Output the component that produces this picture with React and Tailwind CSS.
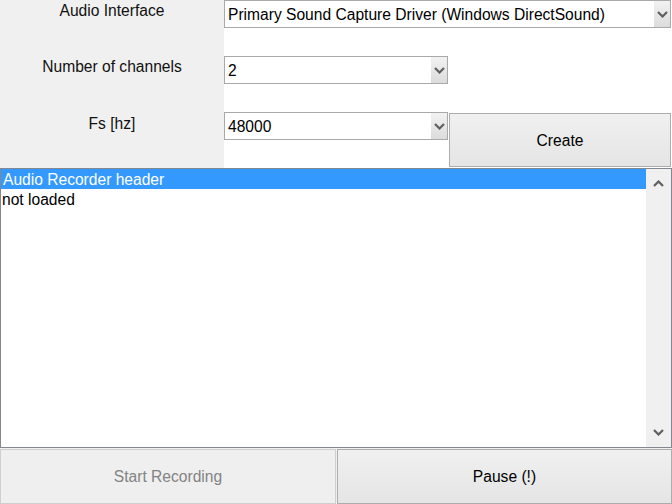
const Chevron = ({ up = false, className = "" }) => (
    <svg width="11" height="7" viewBox="0 0 11 7" className={className}>
        <path
            d={up ? "M1 6 L5.5 1.5 L10 6" : "M1 1 L5.5 5.5 L10 1"}
            fill="none"
            stroke="#5f5f5f"
            strokeWidth="2.2"
        />
    </svg>
);

const Select = ({ value, width }) => (
    <div
        className={`${width} h-[28px] border border-[#a9a9a9] bg-white flex items-center`}
    >
        <span className="flex-1 pl-[3px] pt-[1px] text-black truncate">{value}</span>
        <div className="w-[16px] h-full bg-gradient-to-b from-[#f2f2f2] to-[#dcdcdc] flex items-center justify-center">
            <Chevron />
        </div>
    </div>
);

const App = () => {
    return (
        <div className="w-[672px] h-[504px] bg-[#f0f0f0] flex flex-col text-[15.6px] font-['Liberation_Sans',Arial,sans-serif] overflow-hidden">
            {/* settings */}
            <div className="flex h-[168px]">
                <div className="w-[224px] flex flex-col text-[#111] leading-[20px]">
                    <div className="h-[56px] text-center pt-[1px]">Audio Interface</div>
                    <div className="h-[56px] text-center pt-[1px]">Number of channels</div>
                    <div className="h-[56px] text-center pt-[2px]">Fs [hz]</div>
                </div>
                <div className="flex-1 bg-white flex flex-col">
                    <div className="h-[56px]">
                        <Select
                            value="Primary Sound Capture Driver (Windows DirectSound)"
                            width="w-[447px]"
                        />
                    </div>
                    <div className="h-[56px]">
                        <Select value="2" width="w-[224px]" />
                    </div>
                    <div className="h-[56px] flex items-start">
                        <Select value="48000" width="w-[224px]" />
                        <button className="ml-[1px] mt-[1px] w-[222px] h-[54px] pt-[2px] border border-[#adadad] bg-gradient-to-b from-[#f0f0f0] to-[#e5e5e5] text-black">
                            Create
                        </button>
                    </div>
                </div>
            </div>

            {/* list */}
            <div className="h-[280px] border border-[#828790] bg-white flex">
                <div className="flex-1 flex flex-col">
                    <div className="h-[20px] bg-[#3399ff] text-white pl-[2px] leading-[21px]">
                        Audio Recorder header
                    </div>
                    <div className="h-[20px] text-black pl-[1px] leading-[21px]">not loaded</div>
                </div>
                <div className="w-[25px] bg-[#f0f0f0] flex flex-col justify-between items-center py-[11px]">
                    <Chevron up />
                    <Chevron />
                </div>
            </div>

            {/* buttons */}
            <div className="flex gap-[1px] mt-[1px] h-[55px]">
                <button
                    disabled
                    className="w-[336px] h-full pt-[1px] border border-[#cfcfcf] bg-[#efefef] text-[#838383]"
                >
                    Start Recording
                </button>
                <button className="w-[335px] h-full pt-[1px] border border-[#adadad] bg-gradient-to-b from-[#f0f0f0] to-[#e5e5e5] text-black">
                    Pause (!)
                </button>
            </div>
        </div>
    );
};

export default App;
